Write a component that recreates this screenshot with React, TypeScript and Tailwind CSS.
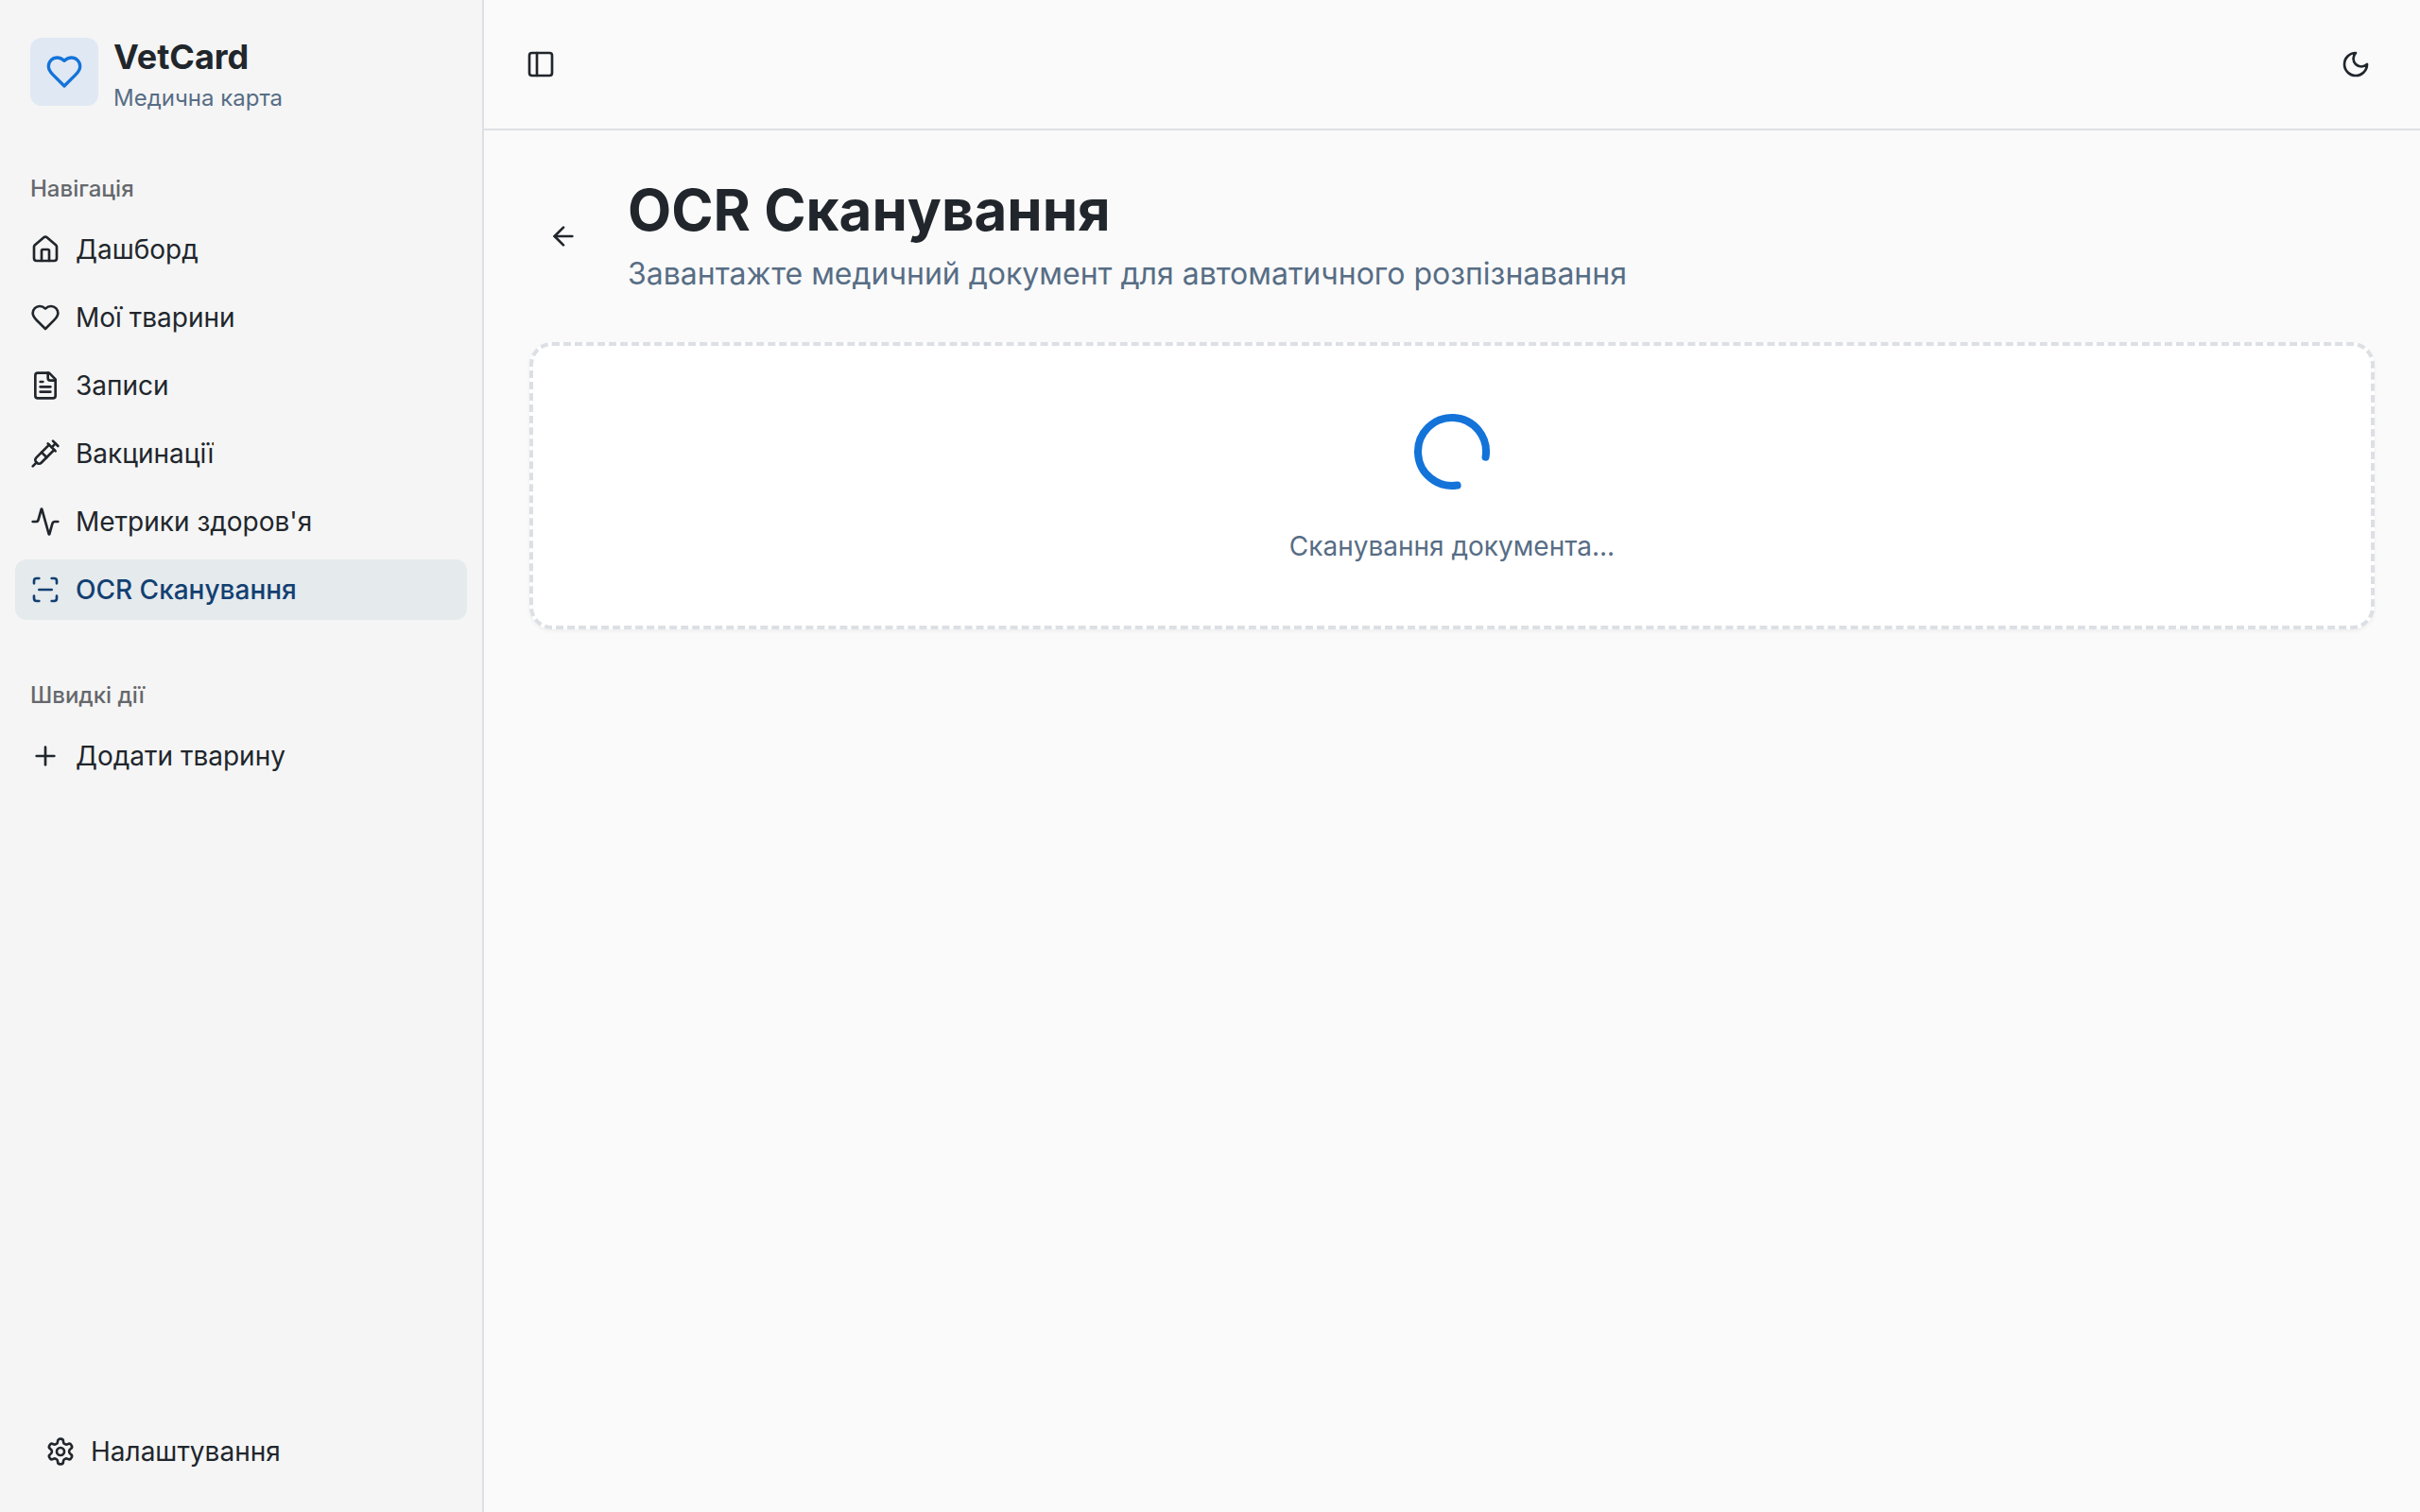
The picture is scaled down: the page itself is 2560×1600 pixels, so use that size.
import type { ReactNode } from "react";
import { Activity, ArrowLeft, LoaderCircle, PanelLeft, Plus, ScanLine, Syringe } from "lucide-react";

type IconProps = { className?: string };

function Icon({ className, children }: IconProps & { children: ReactNode }) {
  return (
    <svg
      viewBox="0 0 24 24"
      fill="none"
      stroke="currentColor"
      strokeWidth="2"
      strokeLinecap="round"
      strokeLinejoin="round"
      className={className}
      aria-hidden="true"
    >
      {children}
    </svg>
  );
}

function HouseIcon({ className }: IconProps) {
  return (
    <Icon className={className}>
      <path d="M15 21v-8a1 1 0 0 0-1-1h-4a1 1 0 0 0-1 1v8" />
      <path d="M3 10a2 2 0 0 1 .709-1.528l7-5.999a2 2 0 0 1 2.582 0l7 5.999A2 2 0 0 1 21 10v9a2 2 0 0 1-2 2H5a2 2 0 0 1-2-2z" />
    </Icon>
  );
}

function HeartIcon({ className }: IconProps) {
  return (
    <Icon className={className}>
      <path d="M19 14c1.49-1.46 3-3.21 3-5.5A5.5 5.5 0 0 0 16.5 3c-1.76 0-3 .5-4.5 2-1.5-1.5-2.74-2-4.5-2A5.5 5.5 0 0 0 2 8.5c0 2.3 1.5 4.05 3 5.5l7 7Z" />
    </Icon>
  );
}

function FileIcon({ className }: IconProps) {
  return (
    <Icon className={className}>
      <path d="M15 2H6a2 2 0 0 0-2 2v16a2 2 0 0 0 2 2h12a2 2 0 0 0 2-2V7Z" />
      <path d="M14 2v4a2 2 0 0 0 2 2h4" />
      <path d="M10 9H8" />
      <path d="M16 13H8" />
      <path d="M16 17H8" />
    </Icon>
  );
}

function MoonIcon({ className }: IconProps) {
  return (
    <Icon className={className}>
      <path d="M12 3a6 6 0 0 0 9 9 9 9 0 1 1-9-9Z" />
    </Icon>
  );
}

function GearIcon({ className }: IconProps) {
  return (
    <Icon className={className}>
      <path d="M12.22 2h-.44a2 2 0 0 0-2 2v.18a2 2 0 0 1-1 1.73l-.43.25a2 2 0 0 1-2 0l-.15-.08a2 2 0 0 0-2.73.73l-.22.38a2 2 0 0 0 .73 2.73l.15.1a2 2 0 0 1 1 1.72v.51a2 2 0 0 1-1 1.74l-.15.09a2 2 0 0 0-.73 2.73l.22.38a2 2 0 0 0 2.73.73l.15-.08a2 2 0 0 1 2 0l.43.25a2 2 0 0 1 1 1.73V20a2 2 0 0 0 2 2h.44a2 2 0 0 0 2-2v-.18a2 2 0 0 1 1-1.73l.43-.25a2 2 0 0 1 2 0l.15.08a2 2 0 0 0 2.73-.73l.22-.39a2 2 0 0 0-.73-2.73l-.15-.08a2 2 0 0 1-1-1.74v-.5a2 2 0 0 1 1-1.74l.15-.09a2 2 0 0 0 .73-2.73l-.22-.38a2 2 0 0 0-2.73-.73l-.15.08a2 2 0 0 1-2 0l-.43-.25a2 2 0 0 1-1-1.73V4a2 2 0 0 0-2-2z" />
      <circle cx="12" cy="12" r="3" />
    </Icon>
  );
}

type Item = { label: string; icon: React.ComponentType<IconProps>; active?: boolean };

const navigation: Item[] = [
  { label: "Дашборд", icon: HouseIcon },
  { label: "Мої тварини", icon: HeartIcon },
  { label: "Записи", icon: FileIcon },
  { label: "Вакцинації", icon: Syringe },
  { label: "Метрики здоров'я", icon: Activity },
  { label: "OCR Сканування", icon: ScanLine, active: true },
];

const quickActions: Item[] = [{ label: "Додати тварину", icon: Plus }];

function NavLink({ label, icon: ItemIcon, active }: Item) {
  return (
    <a
      href="#"
      aria-current={active ? "page" : undefined}
      className={
        active
          ? "flex h-16 items-center gap-4 rounded-xl bg-[#e5eaed] px-4 text-[28px] leading-10 font-medium text-[#124072]"
          : "flex h-16 items-center gap-4 rounded-xl px-4 text-[28px] leading-10 text-[#21262c]"
      }
    >
      <ItemIcon className="size-8 shrink-0" />
      <span className="truncate">{label}</span>
    </a>
  );
}

function NavGroup({ title, items }: { title: string; items: Item[] }) {
  return (
    <section className="p-4">
      <h2 className="flex h-16 items-center px-4 text-2xl font-medium text-[#65686c]">{title}</h2>
      <ul className="flex flex-col gap-2">
        {items.map((item) => (
          <li key={item.label}>
            <NavLink {...item} />
          </li>
        ))}
      </ul>
    </section>
  );
}

export default function App() {
  return (
    <div className="flex min-h-screen bg-[#fafafa] font-[Inter,sans-serif] text-[#21262c]">
      <aside className="flex w-[512px] shrink-0 flex-col border-r-2 border-[#dce0e4] bg-[#f5f5f5]">
        <div className="flex items-center gap-4 p-8">
          <div className="flex size-18 items-center justify-center rounded-xl bg-[#e0e8f4]">
            <HeartIcon className="size-10 text-[#1373d9]" />
          </div>
          <div>
            <p className="text-4xl leading-14 font-bold">VetCard</p>
            <p className="text-2xl leading-8 text-[#576d85]">Медична карта</p>
          </div>
        </div>
        <nav className="flex flex-1 flex-col gap-4">
          <NavGroup title="Навігація" items={navigation} />
          <NavGroup title="Швидкі дії" items={quickActions} />
        </nav>
        <div className="p-8">
          <NavLink label="Налаштування" icon={GearIcon} />
        </div>
      </aside>

      <div className="flex min-w-0 flex-1 flex-col">
        <header className="flex items-center justify-between border-b-2 border-[#dce0e4] p-8">
          <button type="button" aria-label="Бічна панель" className="flex size-14 items-center justify-center rounded-xl">
            <PanelLeft className="size-8" />
          </button>
          <button type="button" aria-label="Змінити тему" className="flex size-18 items-center justify-center rounded-xl">
            <MoonIcon className="size-8" />
          </button>
        </header>

        <main className="flex flex-col gap-12 p-12">
          <div className="flex items-center gap-8">
            <button type="button" aria-label="Назад" className="flex size-18 items-center justify-center rounded-xl">
              <ArrowLeft className="size-8" />
            </button>
            <div>
              <h1 className="text-[60px] leading-18 font-bold">OCR Сканування</h1>
              <p className="mt-2 text-[32px] leading-12 text-[#576d85]">
                Завантажте медичний документ для автоматичного розпізнавання
              </p>
            </div>
          </div>

          <section
            role="status"
            className="flex flex-col items-center gap-8 rounded-3xl border-4 border-dashed border-[#dce0e4] bg-white p-16 shadow-[0_2px_4px_rgb(0_0_0/0.05)]"
          >
            <LoaderCircle className="size-24 rotate-[81deg] text-[#1373d9]" />
            <p className="text-[28px] leading-10 text-[#576d85]">Сканування документа...</p>
          </section>
        </main>
      </div>
    </div>
  );
}
